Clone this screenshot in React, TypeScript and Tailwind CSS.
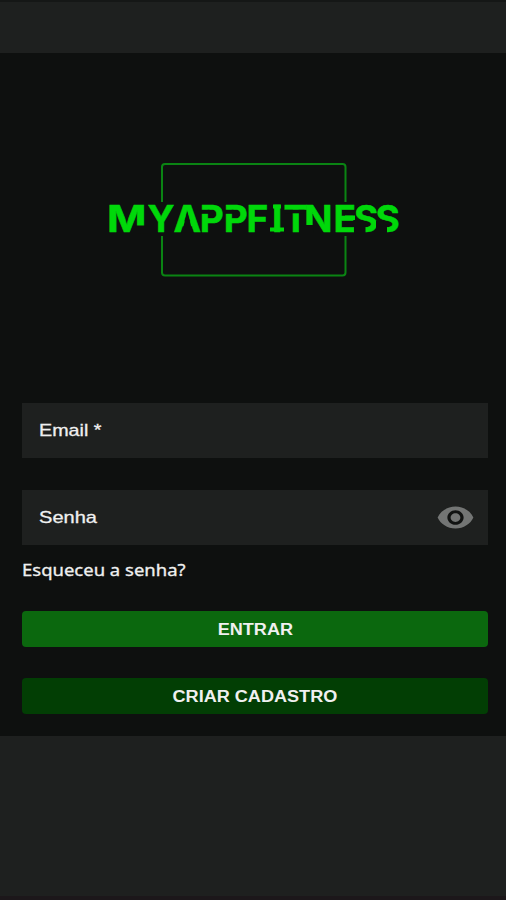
import { useState } from "react";

function Logo() {
  return (
    <svg
      viewBox="105 161 300 120"
      className="block h-[120px] w-[300px]"
      role="img"
      aria-label="MYAPPFITNESS"
    >
      {/* Frame, open where the name crosses it */}
      <g fill="none" stroke="#0a8413" strokeWidth="2">
        <path d="M162 202v-35a3 3 0 0 1 3-3h177.500a3 3 0 0 1 3 3v35" />
        <path d="M162 236v36.500a3 3 0 0 0 3 3h177.500a3 3 0 0 0 3-3V236" />
      </g>
      <text
        y="231.500"
        fill="#00d80a"
        stroke="#00d80a"
        strokeWidth="0.500"
        fontSize="37"
        fontWeight="700"
        fontFamily="Inter, 'Liberation Sans', sans-serif"
      >
        <tspan x="107" textLength="39.500" lengthAdjust="spacingAndGlyphs">
          M
        </tspan>
        <tspan x="147.500 173.500 199.800 223.800 246.500 272 283.500 304.300 333.500 354 375.500">
          YAPPFITNESS
        </tspan>
      </text>
      {/* I serifs and the long middle arm of the E */}
      <g fill="#00d80a">
        <rect x="273" y="204.500" width="8" height="4" />
        <rect x="270" y="227.500" width="14" height="4" />
        <rect x="345" y="215.500" width="10" height="4.500" />
      </g>
      {/* Stencil cuts */}
      <g fill="#0e100f">
        <path d="M181.800 232.500l5.500-21 5.500 21z" />
        <rect x="136" y="225.500" width="12" height="8" />
        <rect x="200" y="209.800" width="9.500" height="4" />
        <rect x="224" y="209.800" width="9.500" height="4" />
        <rect x="285" y="209.800" width="19.500" height="3.500" />
        <rect x="304" y="225" width="9.500" height="8" />
        <rect x="354" y="221" width="11.500" height="12" />
        <rect x="376" y="221" width="11" height="12" />
      </g>
    </svg>
  );
}

function EyeIcon() {
  return (
    <svg
      viewBox="0 0 24 24"
      preserveAspectRatio="none"
      className="h-[35px] w-[39px]"
      fill="#737574"
    >
      <circle cx="12" cy="12" r="5.500" fill="#111312" />
      <path d="M12 4.500C7 4.500 2.730 7.610 1 12c1.730 4.390 6 7.500 11 7.500s9.270-3.110 11-7.500c-1.730-4.390-6-7.500-11-7.500zM12 17c-2.760 0-5-2.240-5-5s2.240-5 5-5 5 2.240 5 5-2.240 5-5 5zm0-8c-1.660 0-3 1.340-3 3s1.340 3 3 3 3-1.340 3-3-1.340-3-3-3z" />
    </svg>
  );
}

function App() {
  const [showPassword, setShowPassword] = useState<boolean>(false);

  return (
    <div className="flex h-[900px] w-full flex-col overflow-hidden border-t-2 border-b-4 border-t-[#151716] border-b-[#1c171a] bg-[#1e201f] font-['Liberation_Sans',sans-serif] text-[#f0f0f0]">
      <header className="relative h-[51px] shrink-0">
        <span className="absolute -top-0.5 right-0 h-0.5 w-1.5 bg-[#cfcfcf]" />
      </header>

      <main className="flex h-[683px] shrink-0 flex-col bg-[#0e100f] pr-[18px] pl-[22px]">
        <div className="flex h-[350px] shrink-0 justify-center pt-[108px]">
          <Logo />
        </div>

        <form className="flex flex-col" onSubmit={(e) => e.preventDefault()}>
          <label className="flex h-[55px] items-center bg-[#1e201f] px-[17px]">
            <span className="origin-left scale-x-[1.16] text-[17px] [-webkit-text-stroke:0.3px]">
              Email *
            </span>
          </label>

          <label className="mt-8 flex h-[55px] items-center justify-between bg-[#1e201f] pr-[13px] pl-[17px]">
            <span className="origin-left scale-x-[1.18] text-[17px] [-webkit-text-stroke:0.3px]">
              Senha
            </span>
            <button type="button" onClick={() => setShowPassword(!showPassword)}>
              <EyeIcon />
            </button>
          </label>

          <a
            href="#"
            className="mt-[13px] origin-left self-start scale-x-[1.155] font-['Noto_Sans',sans-serif] text-[16px] leading-6 [-webkit-text-stroke:0.3px]"
          >
            Esqueceu a senha?
          </a>

          <button
            type="submit"
            className="mt-[29px] flex h-9 items-center justify-center rounded bg-[#0b680e] pt-px font-bold"
          >
            <span className="scale-x-[1.13] text-[16px]">ENTRAR</span>
          </button>
          <button
            type="button"
            className="mt-[31px] flex h-9 items-center justify-center rounded bg-[#023e04] pt-px font-bold"
          >
            <span className="scale-x-[1.13] text-[16px]">CRIAR CADASTRO</span>
          </button>
        </form>
      </main>
    </div>
  );
}

export default App;
